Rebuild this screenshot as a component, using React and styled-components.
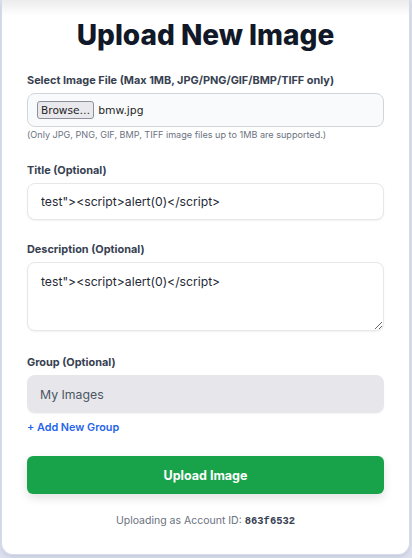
import React from "react";
import styled, { createGlobalStyle } from "styled-components";

const GlobalStyle = createGlobalStyle`
  html, body {
    margin: 0;
    padding: 0;
    background: #dde1ee;
    font-family: Inter, "Noto Sans", sans-serif;
  }
  * { box-sizing: border-box; }
`;

function App() {
  return (
    <>
      <GlobalStyle />
      <Page>
        <Card>
          <Heading>Upload New Image</Heading>

          <Field>
            <Label>Select Image File (Max 1MB, JPG/PNG/GIF/BMP/TIFF only)</Label>
            <FileBox>
              <BrowseButton type="button">Browse…</BrowseButton>
              <FileName>bmw.jpg</FileName>
            </FileBox>
            <Hint>(Only JPG, PNG, GIF, BMP, TIFF image files up to 1MB are supported.)</Hint>
          </Field>

          <Field>
            <Label>Title (Optional)</Label>
            <TextInput defaultValue={'test"><script>alert(0)</script>'} />
          </Field>

          <Field $gap={24}>
            <Label>Description (Optional)</Label>
            <TextArea defaultValue={'test"><script>alert(0)</script>'} />
          </Field>

          <Field $gap={21}>
            <Label>Group (Optional)</Label>
            <SelectBox>My Images</SelectBox>
            <AddGroup href="#">+ Add New Group</AddGroup>
          </Field>

          <SubmitButton type="button">Upload Image</SubmitButton>

          <Footer>
            Uploading as Account ID: <AccountId>863f6532</AccountId>
          </Footer>
        </Card>
      </Page>
    </>
  );
}

export default App;

const Page = styled.div`
  padding: 0 2px 5px 1px;
  overflow: hidden;
`;

const Card = styled.div`
  background: linear-gradient(to bottom, #ececec 0px, #ffffff 16px);
  border: 1px solid #d6daea;
  border-top: none;
  border-radius: 0 0 12px 12px;
  padding: 18px 25px 27px 25px;
  box-shadow: 0 2px 4px rgba(120, 130, 170, 0.25);
  display: flex;
  flex-direction: column;
`;

const Heading = styled.h1`
  margin: 0 0 21px;
  text-align: center;
  font-size: 28px;
  line-height: 34px;
  font-weight: 800;
  color: #111827;
`;

const Field = styled.div`
  display: flex;
  flex-direction: column;
  margin-bottom: ${(p) => p.$gap ?? 22}px;
`;

const Label = styled.label`
  font-size: 10.9px;
  font-weight: 700;
  color: #374151;
  line-height: 14px;
  margin-bottom: 6px;
`;

const FileBox = styled.div`
  display: flex;
  align-items: center;
  height: 34px;
  padding: 0 9px;
  background: #f9fafb;
  border: 1px solid #d1d5db;
  border-radius: 8px;
`;

const BrowseButton = styled.button`
  font-family: "DejaVu Sans", sans-serif;
  font-size: 10.6px;
  color: #1f1f1f;
  background: #e9e9ed;
  border: 1px solid #8f8f9d;
  border-radius: 3px;
  padding: 0 3px;
  height: 18px;
  line-height: 16px;
`;

const FileName = styled.span`
  font-family: "DejaVu Sans", sans-serif;
  font-size: 10.8px;
  color: #1f1f1f;
  margin-left: 4px;
`;

const Hint = styled.p`
  margin: 2px 0 0;
  font-size: 9.1px;
  color: #6b7280;
  line-height: 12px;
`;

const inputBase = `
  width: 100%;
  font-family: Inter, "Noto Sans", sans-serif;
  font-size: 12.2px;
  color: #1f2937;
  background: #ffffff;
  border: 1px solid #e5e7eb;
  border-radius: 8px;
  box-shadow: 0 1px 2px rgba(0, 0, 0, 0.06);
  padding: 0 13px;
  outline: none;
`;

const TextInput = styled.input`
  ${inputBase}
  height: 37px;
`;

const TextArea = styled.textarea`
  ${inputBase}
  height: 69px;
  padding-top: 10px;
  resize: vertical;
  line-height: 17px;
`;

const SelectBox = styled.div`
  display: flex;
  align-items: center;
  height: 38px;
  padding: 0 13px;
  font-size: 12.3px;
  color: #4b5563;
  background: #e7e7eb;
  border-radius: 8px;
  box-shadow: 0 1px 2px rgba(0, 0, 0, 0.05);
`;

const AddGroup = styled.a`
  margin-top: 8px;
  font-size: 10.8px;
  font-weight: 600;
  color: #2563eb;
  text-decoration: none;
  line-height: 14px;
`;

const SubmitButton = styled.button`
  height: 38px;
  width: 100%;
  border: none;
  border-radius: 6px;
  background: #18a34a;
  color: #ffffff;
  font-family: Inter, "Noto Sans", sans-serif;
  font-size: 12.5px;
  font-weight: 700;
  box-shadow: 0 4px 10px rgba(0, 0, 0, 0.12);
`;

const Footer = styled.p`
  margin: 20px 0 0;
  text-align: center;
  font-size: 10.5px;
  color: #6b7280;
`;

const AccountId = styled.span`
  font-family: "Liberation Mono", monospace;
  font-weight: 700;
  color: #374151;
`;
